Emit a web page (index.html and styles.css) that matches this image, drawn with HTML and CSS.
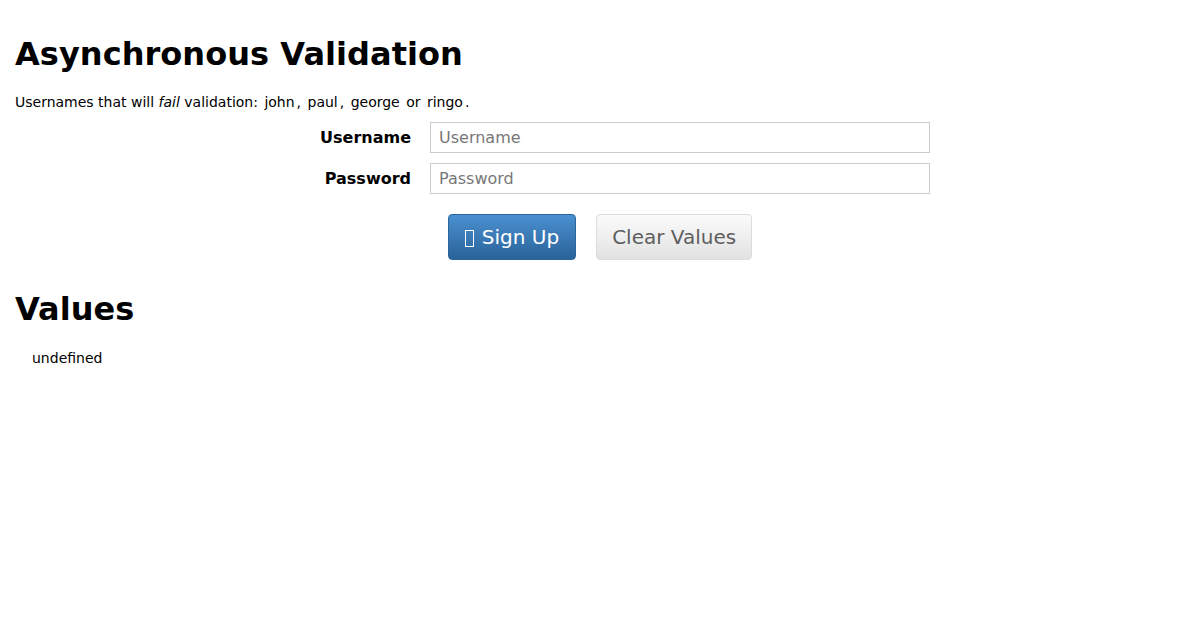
FILE: index.html
```html
<!DOCTYPE html>
<html>
<head>
<meta charset="utf-8">
<link rel="stylesheet" href="styles.css">
</head>
<body>
<div class="page">
  <h1 class="title">Asynchronous Validation</h1>
  <p class="intro">Usernames that will <em>fail</em> validation: <span class="code">john</span>, <span class="code">paul</span>, <span class="code">george</span> or <span class="code">ringo</span>.</p>
  <form class="form">
    <div class="row">
      <label class="label">Username</label>
      <input class="input" type="text" placeholder="Username">
    </div>
    <div class="row">
      <label class="label">Password</label>
      <input class="input" type="password" placeholder="Password">
    </div>
    <div class="actions">
      <button type="button" class="btn btn-primary"><span class="tofu"></span>Sign Up</button>
      <button type="button" class="btn btn-default">Clear Values</button>
    </div>
  </form>
  <h2 class="title values-title">Values</h2>
  <div class="values">undefined</div>
</div>
</body>
</html>
```

FILE: styles.css
```css
html, body {
  margin: 0;
  padding: 0;
  background: #fff;
}
body {
  font-family: "DejaVu Sans", sans-serif;
  font-size: 14px;
  line-height: 20px;
  color: #000;
}
.page {
  padding: 0 15px;
}
.title {
  font-size: 32px;
  font-weight: bold;
  line-height: 35px;
  margin: 37px 0 20px;
  letter-spacing: 0.05px;
}
.intro {
  margin: 0 0 10px;
}
.intro em {
  font-style: italic;
}
.code {
  padding: 0 2px;
}
.form {
  margin: 0;
}
.row {
  display: grid;
  grid-template-columns: 396px 500px;
  column-gap: 19px;
  align-items: center;
  margin-bottom: 10px;
}
.label {
  text-align: right;
  font-weight: bold;
  font-size: 16px;
}
.input {
  box-sizing: border-box;
  height: 31px;
  width: 500px;
  border: 1px solid #ccc;
  border-radius: 0;
  padding: 0 8px;
  margin: 0;
  font-family: "DejaVu Sans", sans-serif;
  font-size: 16px;
  color: #333;
  background: #fff;
}
.input::placeholder {
  color: #777;
}
.actions {
  display: flex;
  justify-content: center;
  gap: 20px;
  margin-top: 20px;
}
.btn {
  box-sizing: border-box;
  height: 46px;
  padding: 0 15px;
  font-family: "DejaVu Sans", sans-serif;
  font-size: 20px;
  line-height: 24px;
  border-radius: 4px;
  display: inline-flex;
  align-items: center;
  cursor: pointer;
}
.btn-primary {
  padding: 0 16px;
  color: #fff;
  background: linear-gradient(to bottom, #4a90d0 0%, #2a6399 100%);
  border: 1px solid #2b669a;
}
.btn-default {
  color: #5e5e5e;
  background: linear-gradient(to bottom, #fbfbfb 0%, #e2e2e2 100%);
  border: 1px solid #dcdcdc;
}
.tofu {
  display: inline-block;
  box-sizing: border-box;
  width: 9px;
  height: 17px;
  border: 1px solid #fff;
  margin-right: 8px;
  margin-top: 2px;
}
.values-title {
  margin-top: 32px;
  margin-bottom: 21px;
}
.values {
  padding-left: 17px;
}
```
